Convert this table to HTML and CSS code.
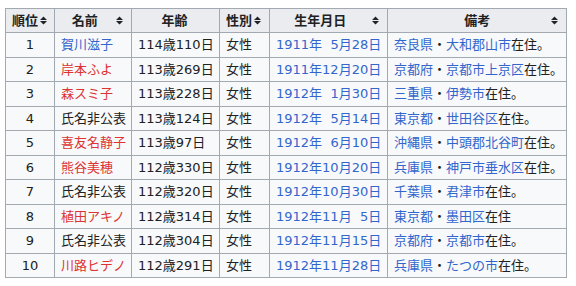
FILE: index.html
```html
<!DOCTYPE html>
<html lang="ja">
<head>
<meta charset="utf-8">
<title>長寿ランキング</title>
<link rel="stylesheet" href="styles.css">
</head>
<body>
<table class="wikitable">
  <colgroup>
    <col class="w-rank"><col class="w-name"><col class="w-age"><col class="w-sex"><col class="w-date"><col class="w-note">
  </colgroup>
  <thead>
    <tr>
      <th class="narrow"><div class="hd"><span class="lbl">順位</span><svg class="sort" width="7" height="9" viewBox="0 0 7 9"><path d="M0 4 L3.5 0.5 L7 4 Z M0 5 L7 5 L3.5 8.5 Z"/></svg></div></th>
      <th class="wide"><div class="hd"><span class="lbl">名前</span><svg class="sort" width="7" height="9" viewBox="0 0 7 9"><path d="M0 4 L3.5 0.5 L7 4 Z M0 5 L7 5 L3.5 8.5 Z"/></svg></div></th>
      <th class="plain"><div class="hd"><span class="lbl">年齢</span></div></th>
      <th class="narrow"><div class="hd"><span class="lbl">性別</span><svg class="sort" width="7" height="9" viewBox="0 0 7 9"><path d="M0 4 L3.5 0.5 L7 4 Z M0 5 L7 5 L3.5 8.5 Z"/></svg></div></th>
      <th class="wide"><div class="hd"><span class="lbl">生年月日</span><svg class="sort" width="7" height="9" viewBox="0 0 7 9"><path d="M0 4 L3.5 0.5 L7 4 Z M0 5 L7 5 L3.5 8.5 Z"/></svg></div></th>
      <th class="wide note-h"><div class="hd"><span class="lbl">備考</span><svg class="sort" width="7" height="9" viewBox="0 0 7 9"><path d="M0 4 L3.5 0.5 L7 4 Z M0 5 L7 5 L3.5 8.5 Z"/></svg></div></th>
    </tr>
  </thead>
  <tbody>
    <tr><td class="c">1</td><td><a class="link">賀川滋子</a></td><td>114歳110日</td><td>女性</td><td><a class="link">1911年</a>&#8199;<a class="link">5月28日</a></td><td><a class="link">奈良県</a>・<a class="link">大和郡山市</a>在住。</td></tr>
    <tr><td class="c">2</td><td><a class="new">岸本ふよ</a></td><td>113歳269日</td><td>女性</td><td><a class="link">1911年</a><a class="link">12月20日</a></td><td><a class="link">京都府</a>・<a class="link">京都市上京区</a>在住。</td></tr>
    <tr><td class="c">3</td><td><a class="new">森スミ子</a></td><td>113歳228日</td><td>女性</td><td><a class="link">1912年</a>&#8199;<a class="link">1月30日</a></td><td><a class="link">三重県</a>・<a class="link">伊勢市</a>在住。</td></tr>
    <tr><td class="c">4</td><td>氏名非公表</td><td>113歳124日</td><td>女性</td><td><a class="link">1912年</a>&#8199;<a class="link">5月14日</a></td><td><a class="link">東京都</a>・<a class="link">世田谷区</a>在住。</td></tr>
    <tr><td class="c">5</td><td><a class="new">喜友名静子</a></td><td>113歳97日</td><td>女性</td><td><a class="link">1912年</a>&#8199;<a class="link">6月10日</a></td><td><a class="link">沖縄県</a>・<a class="link">中頭郡北谷町</a>在住。</td></tr>
    <tr><td class="c">6</td><td><a class="new">熊谷美穂</a></td><td>112歳330日</td><td>女性</td><td><a class="link">1912年</a><a class="link">10月20日</a></td><td><a class="link">兵庫県</a>・<a class="link">神戸市垂水区</a>在住。</td></tr>
    <tr><td class="c">7</td><td>氏名非公表</td><td>112歳320日</td><td>女性</td><td><a class="link">1912年</a><a class="link">10月30日</a></td><td><a class="link">千葉県</a>・<a class="link">君津市</a>在住。</td></tr>
    <tr><td class="c">8</td><td><a class="new">植田アキノ</a></td><td>112歳314日</td><td>女性</td><td><a class="link">1912年</a><a class="link">11月</a>&#8199;<a class="link">5日</a></td><td><a class="link">東京都</a>・<a class="link">墨田区</a>在住</td></tr>
    <tr><td class="c">9</td><td>氏名非公表</td><td>112歳304日</td><td>女性</td><td><a class="link">1912年</a><a class="link">11月15日</a></td><td><a class="link">京都府</a>・<a class="link">京都市</a>在住。</td></tr>
    <tr><td class="c">10</td><td><a class="new">川路ヒデノ</a></td><td>112歳291日</td><td>女性</td><td><a class="link">1912年</a><a class="link">11月28日</a></td><td><a class="link">兵庫県</a>・<a class="link">たつの市</a>在住。</td></tr>
  </tbody>
</table>
</body>
</html>
```
FILE: styles.css
```css
html, body {
  margin: 0;
  padding: 0;
  background: #ffffff;
}

body {
  font-family: "DejaVu Sans", "Noto Sans CJK JP", sans-serif;
  font-size: 13px;
  color: #202122;
}

.wikitable {
  margin: 8px 0 0 5px;
  border-collapse: collapse;
  table-layout: fixed;
  width: 562px;
  background: #f8f9fa;
  border: 1px solid #a2a9b1;
}

.w-rank { width: 49px; }
.w-name { width: 77px; }
.w-age { width: 88px; }
.w-sex { width: 50px; }
.w-date { width: 118px; }
.w-note { width: 179px; }

.wikitable th,
.wikitable td {
  border: 1px solid #a2a9b1;
  padding: 3px 6px;
  line-height: 17.5px;
  white-space: nowrap;
  overflow: hidden;
}

.wikitable th {
  background: #eaecf0;
  font-weight: bold;
  line-height: 17px;
  padding: 3px 8px 3px 6px;
}

.hd {
  display: flex;
  align-items: center;
}

.lbl {
  flex: 1;
  text-align: center;
}

.narrow .lbl {
  flex: none;
}

.narrow .sort {
  margin-left: 2px;
}

.wide .sort {
  margin-left: 7.5px;
}

.note-h .lbl {
  padding-left: 17px;
}

.sort {
  flex: none;
  fill: #202122;
}

.c {
  text-align: center;
}

.link {
  color: #3366cc;
  text-decoration: none;
}

.new {
  color: #dd3333;
  text-decoration: none;
}
```
